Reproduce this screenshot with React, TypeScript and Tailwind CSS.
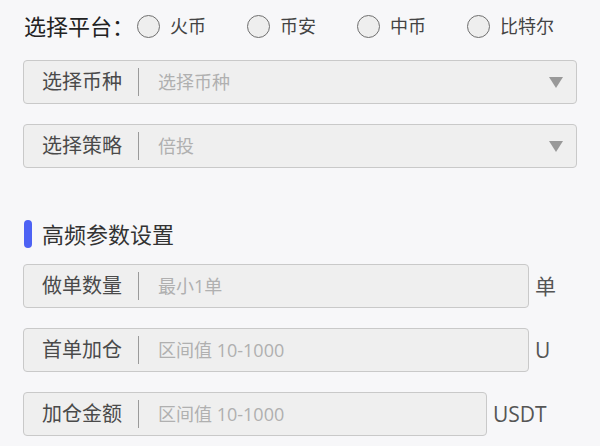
import React, { useState } from 'react';

const FONT = { fontFamily: '"Open Sans", "Noto Sans CJK SC", sans-serif' };

const platforms = ['火币', '币安', '中币', '比特尔'];

function Radio({ label, checked, onClick, first }: { label: string; checked: boolean; onClick: () => void; first?: boolean }) {
  return (
    <button onClick={onClick} className={`flex items-center ${first ? 'ml-[3px]' : 'ml-[41px]'}`}>
      <span className="w-[23px] h-[23px] rounded-full border border-[#6f6f6f] bg-[#eeeeee] flex items-center justify-center">
        {checked && <span className="w-[11px] h-[11px] rounded-full bg-[#4d62f4]" />}
      </span>
      <span className="ml-[10px] text-[18px] leading-none text-[#444]">{label}</span>
    </button>
  );
}

function SelectBox({ label, placeholder }: { label: string; placeholder: string }) {
  return (
    <div className="h-[44px] flex items-center bg-[#efefef] border border-[#c9c9c9] rounded-[4px] pl-[18px] pr-[13px]">
      <span className="text-[20px] leading-none text-[#4a4a4a]">{label}</span>
      <span className="ml-[16px] w-px h-[28px] bg-[#9a9a9a]" />
      <span className="ml-[19px] flex-1 text-[18px] leading-none text-[#b0b0b0]">{placeholder}</span>
      <svg width="14" height="11" viewBox="0 0 14 11">
        <polygon points="0,0 14,0 7,11" fill="#999999" />
      </svg>
    </div>
  );
}

function InputRow({ label, placeholder, unit, unitWidth }: { label: string; placeholder: string; unit: string; unitWidth: string }) {
  return (
    <div className="flex items-center">
      <div className="flex-1 h-[44px] flex items-center bg-[#efefef] border border-[#c9c9c9] rounded-[4px] pl-[18px]">
        <span className="text-[20px] leading-none text-[#4a4a4a]">{label}</span>
        <span className="ml-[16px] w-px h-[28px] bg-[#9a9a9a]" />
        <input
          placeholder={placeholder}
          className="ml-[19px] flex-1 min-w-0 bg-transparent outline-none text-[18px] leading-none text-[#555] placeholder:text-[#b0b0b0]"
          style={FONT}
        />
      </div>
      <span className={`ml-[6px] ${unitWidth} text-[21px] leading-none text-[#555]`}>{unit}</span>
    </div>
  );
}

export default function App() {
  const [platform, setPlatform] = useState<number | null>(null);

  return (
    <div className="min-h-screen w-full bg-[#f7f7f9] px-[23px] pt-[7px]" style={FONT}>
      {/* 平台 */}
      <div className="h-[38px] flex items-center pl-px">
        <span className="text-[22px] leading-none text-[#222]">选择平台：</span>
        {platforms.map((p, i) => (
          <Radio key={p} label={p} first={i === 0} checked={platform === i} onClick={() => setPlatform(i)} />
        ))}
      </div>

      <div className="mt-[15px] flex flex-col gap-[20px]">
        <SelectBox label="选择币种" placeholder="选择币种" />
        <SelectBox label="选择策略" placeholder="倍投" />
      </div>

      {/* 高频参数设置 */}
      <div className="mt-[52px] h-[28px] flex items-center pl-px">
        <span className="w-[8px] h-[28px] rounded-full bg-[#4d62f4]" />
        <span className="ml-[10px] text-[22px] leading-none text-[#333]">高频参数设置</span>
      </div>

      <div className="mt-[16px] flex flex-col gap-[20px]">
        <InputRow label="做单数量" placeholder="最小1单" unit="单" unitWidth="w-[42px]" />
        <InputRow label="首单加仓" placeholder="区间值 10-1000" unit="U" unitWidth="w-[42px]" />
        <InputRow label="加仓金额" placeholder="区间值 10-1000" unit="USDT" unitWidth="w-[84px]" />
      </div>
    </div>
  );
}
